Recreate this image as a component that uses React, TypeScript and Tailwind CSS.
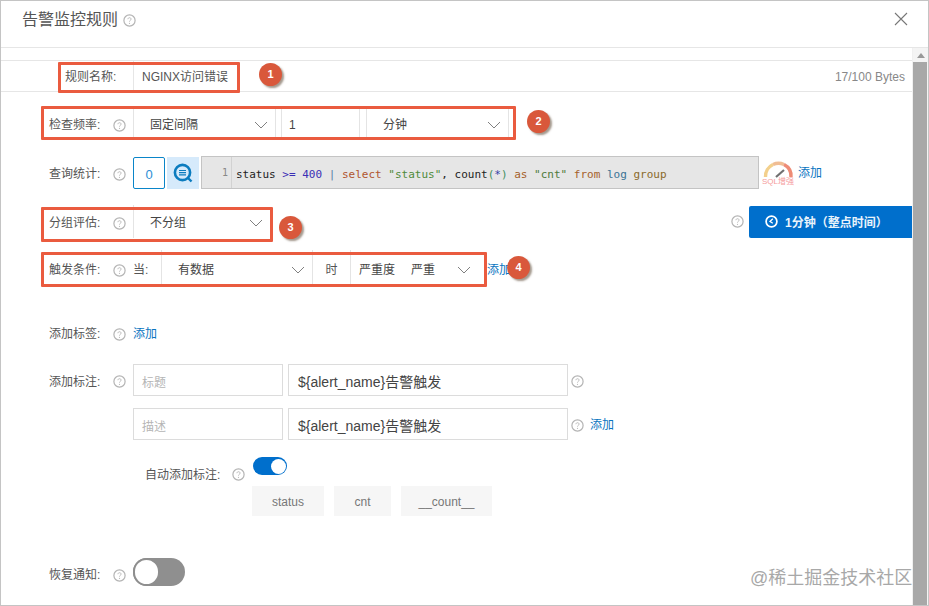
import React from "react";

const font = "font-['Liberation_Sans','Noto_Sans_CJK_SC',sans-serif]";

const Help = ({ className = "" }: { className?: string }) => (
  <svg width="13" height="13" viewBox="0 0 13 13" className={"shrink-0 " + className} fill="none">
    <circle cx="6.5" cy="6.5" r="5.6" stroke="#b4b4b4" strokeWidth="1.2" />
    <path d="M4.9 5.2c.1-1 .8-1.5 1.6-1.5.9 0 1.6.6 1.6 1.4 0 1.2-1.6 1.2-1.6 2.5" stroke="#b4b4b4" strokeWidth="0.9" />
    <circle cx="6.5" cy="9.3" r="0.6" fill="#b4b4b4" />
  </svg>
);

const Chevron = () => (
  <svg width="14" height="8" viewBox="0 0 14 8" fill="none" className="shrink-0">
    <path d="M1 1l6 6 6-6" stroke="#808080" strokeWidth="1" />
  </svg>
);

const Label = ({ text, className = "" }: { text: string; className?: string }) => (
  <div className={"flex items-center w-[84px] shrink-0 " + className}>
    <span className="w-[64px] text-[12px] text-[#555]">{text}</span>
    <Help />
  </div>
);

const Select = ({ text, width, className = "" }: { text: string; width: string; className?: string }) => (
  <div className={`flex items-center justify-between h-full border-x border-[#e4e4e4] pl-[16px] pr-[7px] text-[12px] text-[#444] ${width} ${className}`}>
    <span>{text}</span>
    <Chevron />
  </div>
);

const Add = ({ className = "" }: { className?: string }) => (
  <span className={"flex items-center text-[12px] text-[#0a74bf] " + className}>添加</span>
);

const Badge = ({ n, pos }: { n: number; pos: string }) => (
  <div className={`absolute ${pos} z-20 flex items-center justify-center w-[23px] h-[23px] rounded-full bg-[#d9583b] text-white text-[11px] font-bold shadow-[2px_2px_2px_rgba(90,70,50,0.55)]`}>
    {n}
  </div>
);

const Mark = ({ pos }: { pos: string }) => (
  <div className={`absolute ${pos} z-10 border-[3px] border-[#ea5b3f] rounded-[1px] pointer-events-none`} />
);

const TextBox = ({ text, width, muted = false }: { text: string; width: string; muted?: boolean }) => (
  <div className={`flex items-center h-[32px] border border-[#dcdcdc] pt-[5px] ${width} ${muted ? "pl-[8px] text-[12px] text-[#b5b5b5]" : "pl-[9px] text-[14px] text-[#444]"}`}>
    {text}
  </div>
);

const Switch = ({ on }: { on: boolean }) =>
  on ? (
    <div className="flex items-center justify-end w-[34px] h-[18px] rounded-full bg-[#006fcc] pr-[1px]">
      <div className="w-[15px] h-[15px] rounded-full bg-white" />
    </div>
  ) : (
    <div className="flex items-center w-[52px] h-[28px] rounded-full bg-[#8f8f8f]">
      <div className="w-[27px] h-[28px] rounded-full bg-white border-2 border-[#8f8f8f]" />
    </div>
  );

const Chip = ({ text, width }: { text: string; width: string }) => (
  <div className={`flex items-center justify-center h-[30px] pt-[2px] bg-[#f6f6f6] text-[12px] text-[#777] ${width}`}>{text}</div>
);

const SqlGauge = () => (
  <div className="relative w-[32px] h-[28px] shrink-0">
    <svg width="32" height="20" viewBox="0 0 32 20" fill="none">
      <path d="M3.5 18A13 13 0 0 1 11 5.5" stroke="#f3d08c" strokeWidth="3.4" />
      <path d="M11 5.5A13 13 0 0 1 22 5.5" stroke="#f0bd94" strokeWidth="3.4" />
      <path d="M22 5.5A13 13 0 0 1 29 18" stroke="#ee8b76" strokeWidth="3.4" />
      <path d="M14 18l8-7" stroke="#707070" strokeWidth="2.2" />
    </svg>
    <span className="absolute left-0 bottom-0 text-[8px] leading-[10px] whitespace-nowrap text-[#f59c9c]">SQL增强</span>
  </div>
);

const Code = () => (
  <div className="flex items-stretch w-[558px] h-[33px] ml-[2px] border border-[#c4c4c4] bg-[#e6e6e6] font-['DejaVu_Sans_Mono',monospace] text-[11px]">
    <div className="flex items-center justify-end w-[30px] pr-[3px] pb-[1px] border-r border-[#d2d2d2] text-[#888] text-[10px]">1</div>
    <div className="flex items-center pl-[4px] pt-[6px] whitespace-pre text-[#222]">
      <span>status </span>
      <span className="text-[#3a2fb5]">&gt;= 400</span>
      <span className="text-[#5b7fa6]"> | </span>
      <span className="text-[#b0552f]">select </span>
      <span className="text-[#4f8a3a]">"status"</span>
      <span>, count</span>
      <span className="text-[#3f8f5f]">(</span>
      <span className="text-[#2f3fa8]">*</span>
      <span className="text-[#3f8f5f]">)</span>
      <span className="text-[#a5602a]"> as </span>
      <span className="text-[#4f7a3a]">"cnt"</span>
      <span className="text-[#a5602a]"> from </span>
      <span className="text-[#3a7294]">log </span>
      <span className="text-[#8a6a2a]">group</span>
    </div>
  </div>
);

export default function App() {
  return (
    <div className={`relative w-[929px] h-[606px] overflow-hidden bg-white border border-[#c4c4c4] ${font}`}>
      {/* Header */}
      <div className="flex items-center justify-between h-[47px] border-b border-[#e6e6e6] pl-[21px] pr-[20px]">
        <div className="flex items-center gap-[5px] -mt-[8px]">
          <span className="text-[16px] text-[#555]">告警监控规则</span>
          <Help />
        </div>
        <svg width="14" height="14" viewBox="0 0 14 14" className="-mt-[10px]" fill="none">
          <path d="M1 1l12 12M13 1L1 13" stroke="#777" strokeWidth="1.1" />
        </svg>
      </div>

      <div className="flex h-[557px]">
        {/* Form */}
        <div className="w-[911px] pt-[12px] shrink-0">
          <div className="flex items-stretch h-[32px] pl-[64px] border-y border-[#e6e6e6] [&>*]:pt-[2px]">
            <span className="flex items-center w-[68px] text-[12px] text-[#555]">规则名称:</span>
            <div className="flex items-center justify-between flex-1 border-l border-[#e6e6e6] pl-[8px] pr-[7px] text-[12px]">
              <span className="text-[#555]">NGINX访问错误</span>
              <span className="text-[#888]">17/100 Bytes</span>
            </div>
          </div>

          <div className="flex items-stretch h-[30px] mt-[16px] pl-[48px] [&>*]:pt-[4px]">
            <Label text="检查频率:" />
            <Select text="固定间隔" width="w-[143px]" />
            <div className="flex items-center w-[79px] ml-[5px] border-x border-[#e4e4e4] pl-[7px] text-[12px] text-[#444]">1</div>
            <div className="w-[6px]" />
            <Select text="分钟" width="w-[143px]" />
          </div>

          <div className="flex items-center h-[33px] mt-[18px] pl-[48px]">
            <Label text="查询统计:" className="pt-[3px]" />
            <div className="flex items-center justify-center w-[32px] h-[32px] pt-[4px] border border-[#0a85c9] rounded-[2px] text-[13px] text-[#2c8fd6]">0</div>
            <div className="flex items-center justify-center w-[32px] h-[32px] ml-[2px] bg-[#d6eafb]">
              <svg width="20" height="20" viewBox="0 0 20 20" fill="none">
                <circle cx="9.5" cy="9.5" r="7.6" stroke="#0b7cbf" strokeWidth="2.6" />
                <path d="M6 7.5h7M6 9.7h7M6 11.9h7" stroke="#0b7cbf" strokeWidth="1.2" />
                <path d="M15 15l3.5 3.5" stroke="#0b7cbf" strokeWidth="2.4" />
              </svg>
            </div>
            <Code />
            <div className="ml-[3px]"><SqlGauge /></div>
            <Add className="ml-[4px]" />
          </div>

          <div className="flex items-center h-[33px] mt-[16px] pl-[48px]">
            <Label text="分组评估:" className="pt-[3px]" />
            <Select text="不分组" width="w-[137px] border-r-0" className="pt-[3px]" />
            <div className="flex items-center ml-auto">
              <Help className="mr-[5px]" />
              <div className="flex items-center w-[163px] h-[32px] bg-[#006fcc] rounded-l-[2px] pl-[16px] gap-[7px] text-[12px] font-bold text-[#e9f3fb]">
                <svg width="13" height="13" viewBox="0 0 13 13" fill="none">
                  <circle cx="6.5" cy="6.5" r="5.4" stroke="#fff" strokeWidth="1.7" />
                  <path d="M7.8 3.8L5 6.5l2.8 1.8" stroke="#fff" strokeWidth="1.3" />
                </svg>
                <span className="pt-[2px]">1分钟（整点时间）</span>
              </div>
            </div>
          </div>

          <div className="flex items-stretch h-[34px] mt-[12px] pl-[48px] text-[12px] text-[#555] [&>*]:pt-[6px]">
            <Label text="触发条件:" />
            <span className="flex items-center w-[28px]">当:</span>
            <Select text="有数据" width="w-[152px]" />
            <span className="flex items-center justify-center w-[37px]">时</span>
            <div className="flex items-center w-[133px] border-l border-[#e4e4e4] pl-[8px] pr-[12px] text-[#444]">
              <span>严重度</span>
              <span className="ml-[16px]">严重</span>
              <span className="ml-auto"><Chevron /></span>
            </div>
            <Add className="ml-[4px]" />
          </div>

          <div className="flex items-center h-[20px] mt-[40px] pl-[48px]">
            <Label text="添加标签:" />
            <Add />
          </div>

          <div className="flex items-center mt-[20px] pl-[48px]">
            <Label text="添加标注:" className="pt-[3px]" />
            <TextBox text="标题" width="w-[150px]" muted />
            <div className="w-[5px]" />
            <TextBox text="${alert_name}告警触发" width="w-[280px]" />
            <Help className="ml-[3px] mt-[3px]" />
          </div>

          <div className="flex items-center mt-[12px] pl-[132px]">
            <TextBox text="描述" width="w-[150px]" muted />
            <div className="w-[5px]" />
            <TextBox text="${alert_name}告警触发" width="w-[280px]" />
            <Help className="ml-[3px] mt-[3px]" />
            <Add className="ml-[6px] mt-[1px]" />
          </div>

          <div className="flex items-start h-[29px] mt-[17px] pl-[144px]">
            <span className="w-[87px] mt-[9px] text-[12px] text-[#555]">自动添加标注:</span>
            <Help className="mt-[11px]" />
            <div className="ml-[8px]"><Switch on /></div>
          </div>

          <div className="flex gap-[10px] pl-[251px]">
            <Chip text="status" width="w-[72px]" />
            <Chip text="cnt" width="w-[57px]" />
            <Chip text="__count__" width="w-[91px]" />
          </div>

          <div className="flex items-center h-[28px] mt-[42px] pl-[48px]">
            <Label text="恢复通知:" className="pt-[6px]" />
            <Switch on={false} />
          </div>
        </div>

        {/* Scrollbar */}
        <div className="flex flex-col w-[16px] border-l border-[#f0f0f0] bg-[#f4f4f4]">
          <div className="flex items-center justify-center h-[14px] shrink-0">
            <div className="w-0 h-0 border-x-[4px] border-x-transparent border-b-[5px] border-b-[#999]" />
          </div>
          <div className="flex-1 mr-[1px] bg-[#a8a8a8]" />
        </div>
      </div>

      {/* Annotations */}
      <Mark pos="left-[57px] top-[61px] w-[182px] h-[31px]" />
      <Mark pos="left-[40px] top-[105px] w-[475px] h-[34px]" />
      <Mark pos="left-[40px] top-[206px] w-[232px] h-[35px]" />
      <Mark pos="left-[40px] top-[251px] w-[446px] h-[35px]" />
      <Badge n={1} pos="left-[258px] top-[62px]" />
      <Badge n={2} pos="left-[526px] top-[109px]" />
      <Badge n={3} pos="left-[278px] top-[215px]" />
      <Badge n={4} pos="left-[506px] top-[255px]" />

      <span className="absolute left-[749px] top-[564px] z-20 text-[18px] leading-[26px] text-[#a8a8a8] whitespace-nowrap">@稀土掘金技术社区</span>
    </div>
  );
}
